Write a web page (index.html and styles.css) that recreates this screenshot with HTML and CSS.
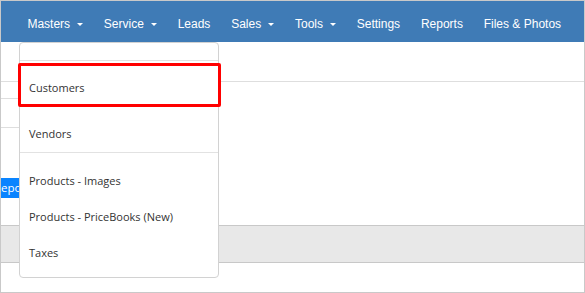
FILE: index.html
```html
<!DOCTYPE html>
<html>
<head>
	<title>Masters menu</title>
	<link rel="stylesheet" href="styles.css">
</head>
<body>
<div class="frame">
	<ul class="navbar">
		<li>Masters<span class="caret"></span></li>
		<li>Service<span class="caret"></span></li>
		<li>Leads</li>
		<li>Sales<span class="caret"></span></li>
		<li>Tools<span class="caret"></span></li>
		<li>Settings</li>
		<li>Reports</li>
		<li>Files &amp; Photos</li>
	</ul>
	<div class="toolbar"></div>
	<div class="filter">
		<div class="filter-top"></div>
		<div class="filter-row"></div>
	</div>
	<div class="actions">
		<span class="btn">Reports</span>
	</div>
	<div class="band"></div>

	<ul class="dropdown">
		<li class="dropdown-head"></li>
		<li class="divider"></li>
		<li class="item">Customers</li>
		<li class="item spaced">Vendors</li>
		<li class="divider after"></li>
		<li class="item">Products - Images</li>
		<li class="item">Products - PriceBooks (New)</li>
		<li class="item">Taxes</li>
	</ul>
	<div class="highlight"></div>
</div>
</body>
</html>
```

FILE: styles.css
```css
html, body{
	margin: 0;
	padding: 0;
	background-color: #fff;
	overflow: hidden;
}
.frame{
	position: relative;
	width: 585px;
	height: 293px;
	box-sizing: border-box;
	border: 1px solid #c9c9c9;
	overflow: hidden;
	font-family: "Liberation Sans", Arial, sans-serif;
}
.navbar{
	display: flex;
	align-items: center;
	height: 41px;
	box-sizing: border-box;
	margin: 0;
	padding: 5px 0 0 16px;
	list-style: none;
	background-color: #3f7bb6;
}
.navbar li{
	padding: 0 10.4px;
	color: #fff;
	font-size: 12px;
	white-space: nowrap;
}
.caret{
	display: inline-block;
	margin-left: 7px;
	vertical-align: 2px;
	border-top: 3px solid #fff;
	border-left: 3px solid transparent;
	border-right: 3px solid transparent;
}
.toolbar{
	height: 39px;
	border-bottom: 1px solid #dedede;
}
.filter{
	width: 60px;
}
.filter-top{
	height: 16px;
	border-bottom: 1px solid #dedede;
}
.filter-row{
	height: 28px;
	border-bottom: 1px solid #dedede;
}
.actions{
	width: 18px;
	height: 20px;
	margin-top: 50px;
	overflow: hidden;
}
.btn{
	display: inline-block;
	margin-left: -15px;
	padding: 0 8px;
	height: 20px;
	line-height: 20px;
	background-color: #0a84ff;
	color: #fff;
	font-family: "Open Sans", sans-serif;
	font-size: 11.5px;
	white-space: nowrap;
}
.band{
	margin-top: 27px;
	height: 36px;
	background-color: #e8e8e8;
	border-top: 1px solid #c8c8c8;
	border-bottom: 1px solid #c8c8c8;
}
.dropdown{
	position: absolute;
	left: 18px;
	top: 41px;
	width: 200px;
	box-sizing: border-box;
	margin: 0;
	padding: 0 0 6px;
	list-style: none;
	background-color: #fff;
	border: 1px solid #d2d2d2;
	border-radius: 4px;
	font-family: "Open Sans", sans-serif;
	font-size: 11px;
	color: #333;
}
.dropdown-head{
	height: 17px;
}
.divider{
	height: 0;
	margin-bottom: 9px;
	border-top: 1px solid #e2e2e2;
}
.divider.after{
	margin-bottom: 10px;
}
.item{
	height: 36px;
	line-height: 36px;
	padding-left: 9px;
	white-space: nowrap;
}
.spaced{
	margin-top: 10px;
}
.highlight{
	position: absolute;
	left: 17px;
	top: 62px;
	width: 203px;
	height: 44px;
	box-sizing: border-box;
	border: 3px solid #f00;
	border-radius: 2px;
}
```
